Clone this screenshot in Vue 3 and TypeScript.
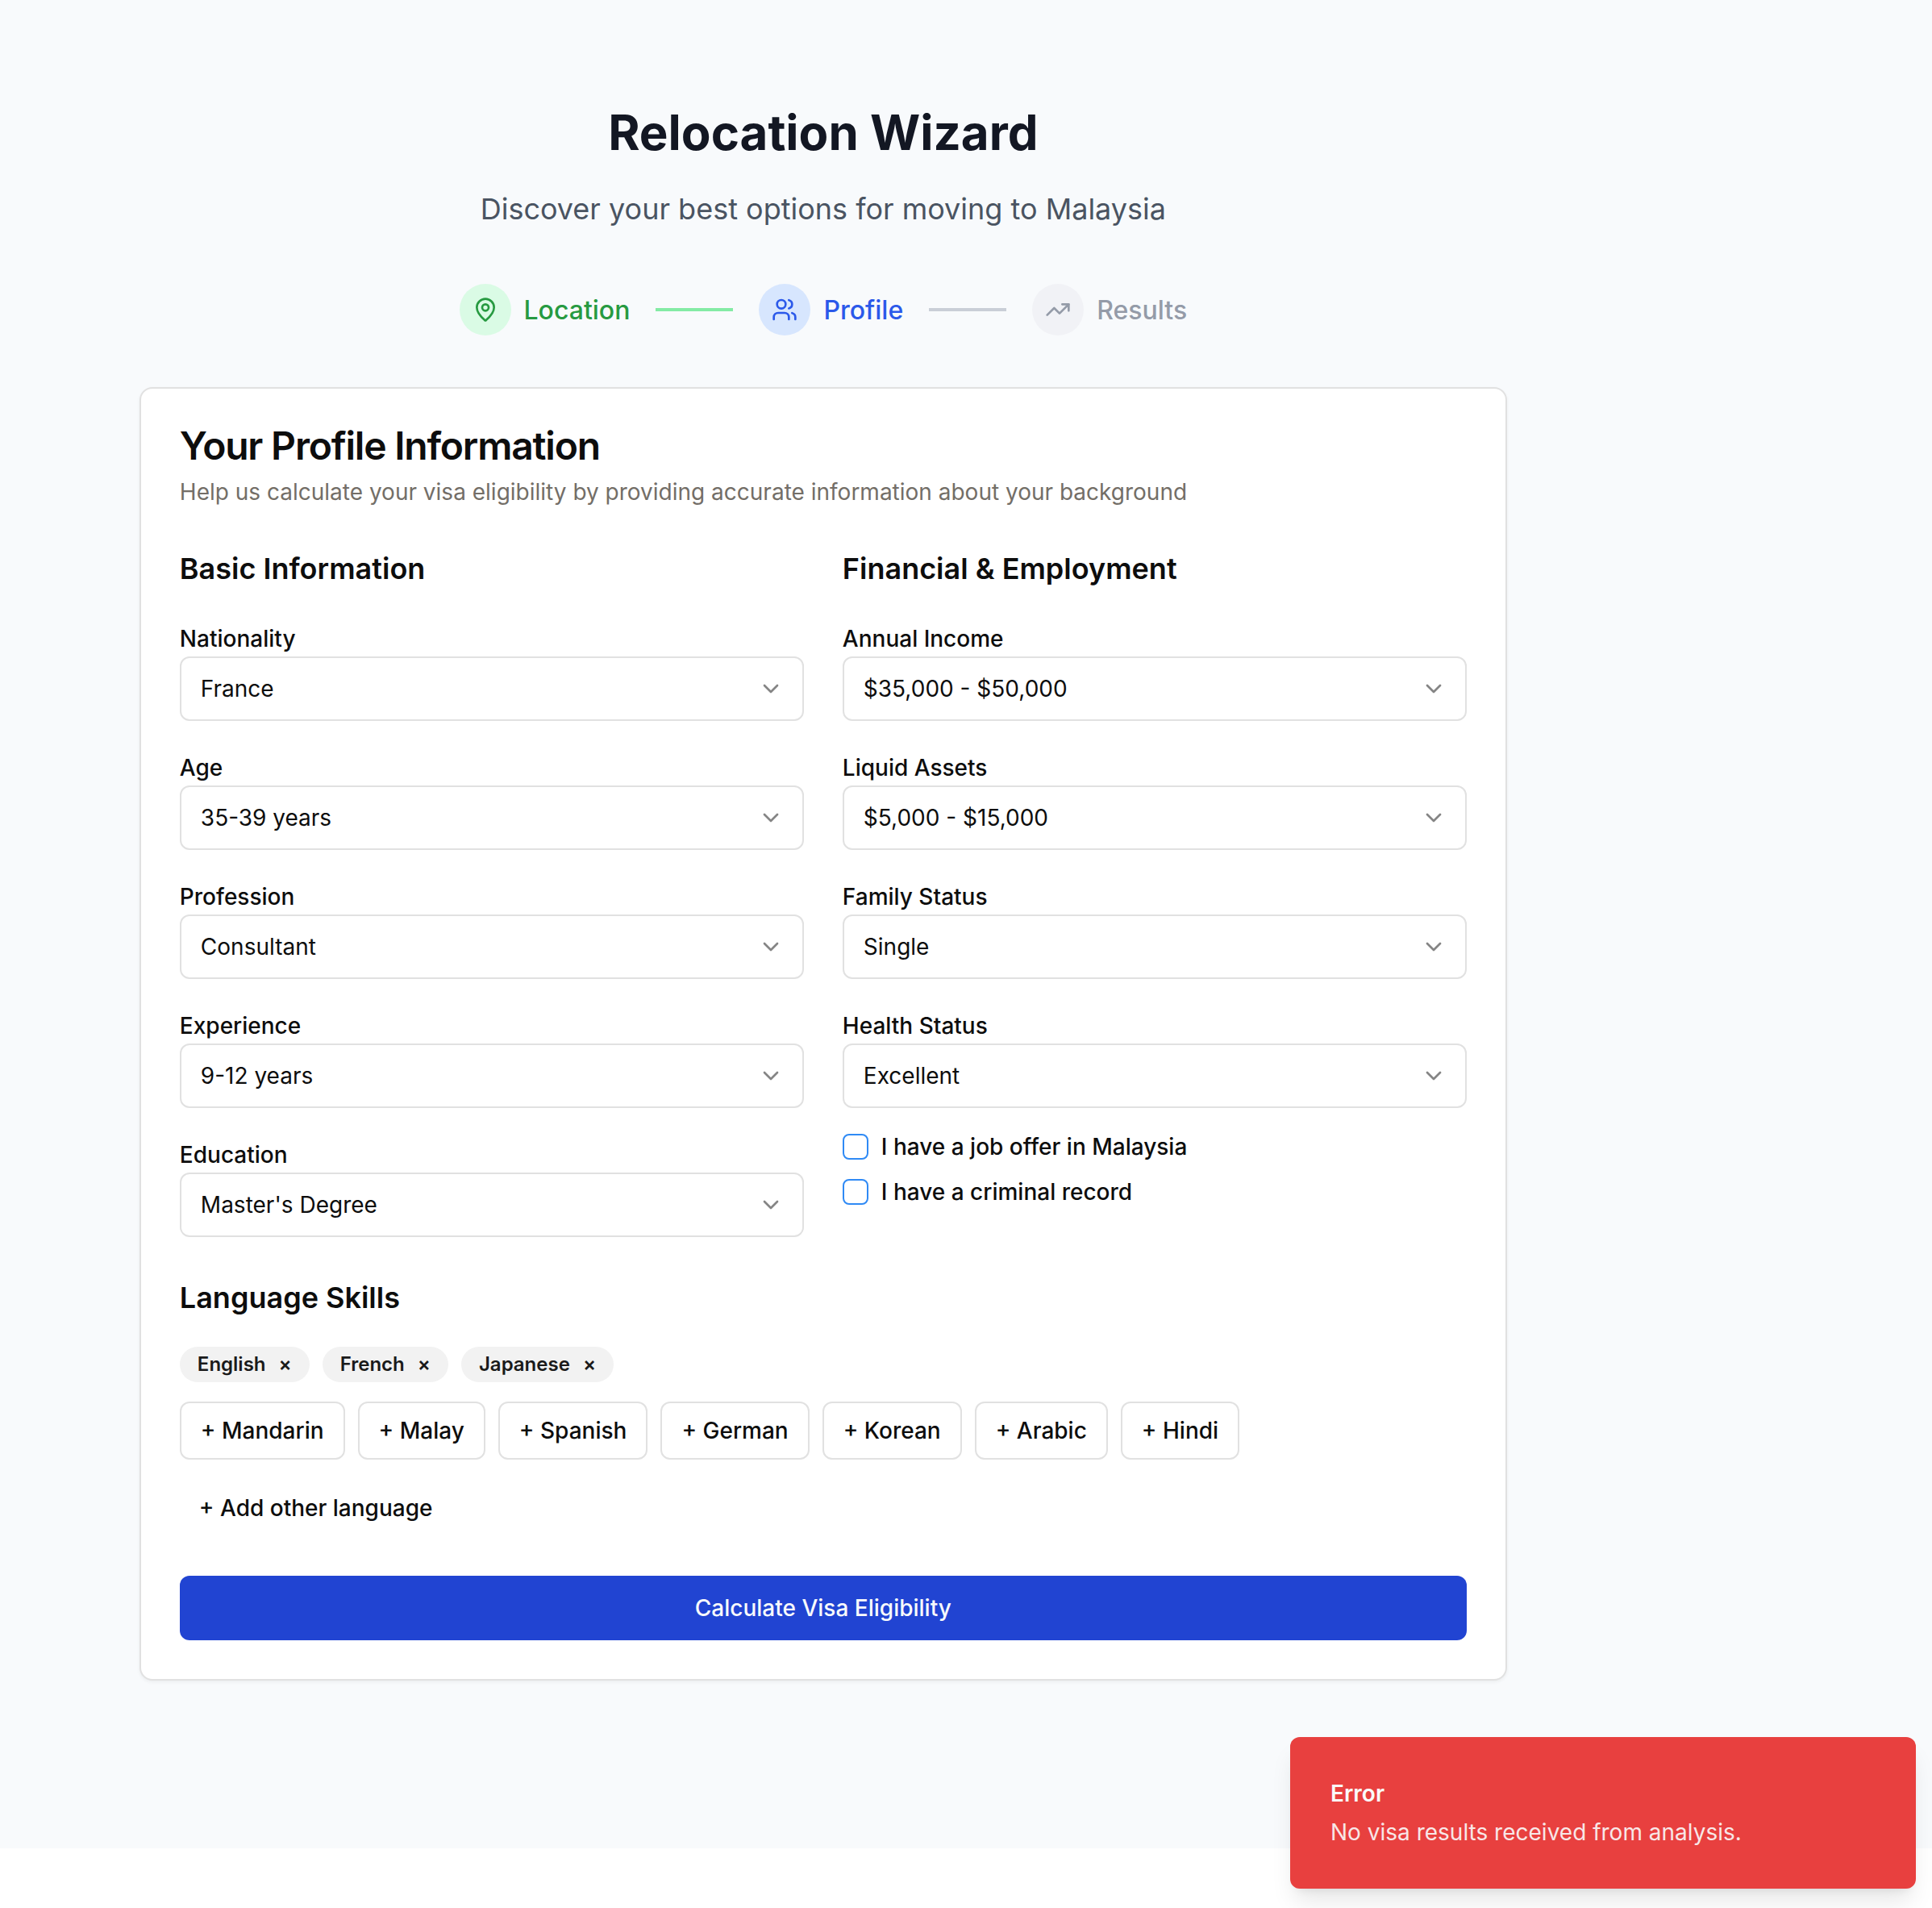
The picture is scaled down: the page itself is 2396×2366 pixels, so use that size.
<script setup lang="ts">
interface Field {
  label: string
  value: string
}

const basicFields: Field[] = [
  { label: 'Nationality', value: 'France' },
  { label: 'Age', value: '35-39 years' },
  { label: 'Profession', value: 'Consultant' },
  { label: 'Experience', value: '9-12 years' },
  { label: 'Education', value: "Master's Degree" },
]

const financialFields: Field[] = [
  { label: 'Annual Income', value: '$35,000 - $50,000' },
  { label: 'Liquid Assets', value: '$5,000 - $15,000' },
  { label: 'Family Status', value: 'Single' },
  { label: 'Health Status', value: 'Excellent' },
]

const columns = [
  { title: 'Basic Information', fields: basicFields, checks: [] as string[] },
  {
    title: 'Financial & Employment',
    fields: financialFields,
    checks: ['I have a job offer in Malaysia', 'I have a criminal record'],
  },
]

const selected: string[] = ['English', 'French', 'Japanese']
const available: string[] = ['Mandarin', 'Malay', 'Spanish', 'German', 'Korean', 'Arabic', 'Hindi']
</script>

<template>
  <div class="page">
    <main class="container">
      <header class="hero">
        <h1>Relocation Wizard</h1>
        <p>Discover your best options for moving to Malaysia</p>
      </header>

      <nav class="steps">
        <div class="step done">
          <span class="bubble">
            <svg viewBox="0 0 24 24">
              <path d="M20 10c0 4.993-5.539 10.193-7.399 11.799a1 1 0 0 1-1.202 0C9.539 20.193 4 14.993 4 10a8 8 0 0 1 16 0" />
              <circle cx="12" cy="10" r="3" />
            </svg>
          </span>
          <span class="name">Location</span>
        </div>
        <div class="line line-done"></div>
        <div class="step active">
          <span class="bubble">
            <svg viewBox="0 0 24 24">
              <path d="M16 21v-2a4 4 0 0 0-4-4H6a4 4 0 0 0-4 4v2" />
              <circle cx="9" cy="7" r="4" />
              <path d="M22 21v-2a4 4 0 0 0-3-3.87" />
              <path d="M16 3.13a4 4 0 0 1 0 7.75" />
            </svg>
          </span>
          <span class="name">Profile</span>
        </div>
        <div class="line"></div>
        <div class="step">
          <span class="bubble">
            <svg viewBox="0 0 24 24">
              <polyline points="22 7 13.5 15.5 8.5 10.5 2 17" />
              <polyline points="16 7 22 7 22 13" />
            </svg>
          </span>
          <span class="name">Results</span>
        </div>
      </nav>

      <section class="card">
        <h2>Your Profile Information</h2>
        <p class="description">
          Help us calculate your visa eligibility by providing accurate information about your background
        </p>

        <div class="columns">
          <div v-for="column in columns" :key="column.title">
            <h3>{{ column.title }}</h3>
            <div v-for="field in column.fields" :key="field.label" class="field">
              <label>{{ field.label }}</label>
              <button class="select" type="button">
                <span>{{ field.value }}</span>
                <svg viewBox="0 0 24 24"><path d="m6 9 6 6 6-6" /></svg>
              </button>
            </div>
            <div v-if="column.checks.length" class="checks">
              <div v-for="check in column.checks" :key="check" class="check">
                <span class="box"></span>
                <span>{{ check }}</span>
              </div>
            </div>
          </div>
        </div>

        <h3 class="languages-title">Language Skills</h3>
        <div class="badges">
          <span v-for="language in selected" :key="language" class="badge">
            {{ language }}<span class="remove">×</span>
          </span>
        </div>
        <div class="options">
          <button v-for="language in available" :key="language" class="option" type="button">+ {{ language }}</button>
        </div>
        <button class="add" type="button">+ Add other language</button>
        <button class="submit" type="button">Calculate Visa Eligibility</button>
      </section>
    </main>

    <aside class="toast">
      <strong>Error</strong>
      <span>No visa results received from analysis.</span>
    </aside>
  </div>
</template>

<style>
body {
  background: #fff;
}
</style>

<style scoped>
* {
  box-sizing: border-box;
}

.page {
  position: relative;
  height: 2366px;
  overflow: hidden;
  background: linear-gradient(#f8fafc 2292px, #fff 2292px);
  color: #0d0d0d;
  font-family: Inter, sans-serif;
  font-size: 28px;
  line-height: 40px;
}

h1,
h2,
h3,
p {
  margin: 0;
}

button {
  font: inherit;
  color: inherit;
  padding: 0;
  border: 0;
  background: none;
}

svg {
  display: block;
  fill: none;
  stroke: currentColor;
  stroke-width: 2;
  stroke-linecap: round;
  stroke-linejoin: round;
}

.container {
  width: 1696px;
  margin-left: 172.85px;
  padding-top: 124px;
}

.hero {
  text-align: center;
}

h1 {
  font-size: 60px;
  line-height: 80px;
  font-weight: 700;
  color: #131723;
}

.hero p {
  margin-top: 27px;
  font-size: 36px;
  line-height: 56px;
  color: #4a5462;
}

.steps {
  display: flex;
  align-items: center;
  justify-content: center;
  gap: 32px;
  margin-top: 65px;
  font-size: 32px;
  line-height: 48px;
  font-weight: 500;
}

.step {
  display: flex;
  align-items: center;
  gap: 16px;
  color: #949ba8;
}

.name {
  padding-top: 2px;
}

.bubble {
  display: flex;
  align-items: center;
  justify-content: center;
  width: 64px;
  height: 64px;
  border-radius: 50%;
  background: #f1f2f6;
}

.bubble svg {
  width: 32px;
  height: 32px;
}

.done {
  color: #279a41;
}

.done .bubble {
  background: #dafbe5;
}

.active {
  color: #2b59ea;
}

.active .bubble {
  background: #d7e6fe;
}

.line {
  width: 96px;
  height: 4px;
  background: #c9ced7;
}

.line-done {
  background: #84eba5;
}

.card {
  height: 1604px;
  margin-top: 64px;
  padding: 47px 48px 48px;
  border: 2px solid #e1e1e1;
  border-radius: 16px;
  background: #fff;
  box-shadow: 0 2px 4px rgba(0, 0, 0, 0.05);
}

h2 {
  font-size: 48px;
  line-height: 48px;
  font-weight: 600;
  letter-spacing: -1.2px;
}

.description {
  margin-top: 13px;
  color: #736e67;
}

.columns {
  display: grid;
  grid-template-columns: 1fr 1fr;
  gap: 48px;
  margin-top: 47px;
}

h3 {
  font-size: 36px;
  line-height: 56px;
  font-weight: 600;
}

.field {
  height: 128px;
  margin-top: 32px;
}

h3 + .field {
  margin-top: 33px;
}

label {
  display: block;
  height: 48px;
  padding-top: 2px;
  line-height: 48px;
  font-weight: 500;
}

.select {
  display: flex;
  align-items: center;
  justify-content: space-between;
  width: 100%;
  height: 80px;
  padding: 0 23px 0 24px;
  border: 2px solid #e1e1e1;
  border-radius: 12px;
}

.select svg {
  width: 32px;
  height: 32px;
  opacity: 0.5;
}

.checks {
  display: grid;
  gap: 16px;
  margin-top: 28px;
}

.check {
  display: flex;
  align-items: center;
  gap: 16px;
  font-weight: 500;
}

.box {
  width: 32px;
  height: 32px;
  border: 2px solid #2f8af5;
  border-radius: 8px;
}

.languages-title {
  margin-top: 47px;
}

.badges,
.options {
  display: flex;
  gap: 16px;
}

.badges {
  margin-top: 33px;
}

.badge {
  height: 44px;
  padding: 0 22px;
  border-radius: 22px;
  background: #f2f2f2;
  color: #1a1a1a;
  font-size: 24px;
  line-height: 44px;
  font-weight: 600;
}

.remove {
  margin-left: 16px;
}

.options {
  margin-top: 24px;
}

.option {
  height: 72px;
  padding: 0 24px;
  border: 2px solid #e1e1e1;
  border-radius: 12px;
  font-weight: 500;
}

.add {
  display: block;
  height: 72px;
  margin-top: 24px;
  padding: 0 24px;
  font-weight: 500;
}

.submit {
  width: 100%;
  height: 80px;
  margin-top: 48px;
  border-radius: 12px;
  background: #2144d2;
  color: #f8fafc;
  font-weight: 500;
}

.toast {
  position: absolute;
  left: 1600px;
  top: 2154px;
  display: flex;
  flex-direction: column;
  gap: 8px;
  width: 776px;
  height: 188px;
  padding: 50px;
  border-radius: 12px;
  background: #e8403f;
  color: #fafafa;
  box-shadow: 0 20px 30px -6px rgba(0, 0, 0, 0.1), 0 8px 12px -8px rgba(0, 0, 0, 0.1);
}

.toast strong {
  font-weight: 600;
}

.toast span {
  opacity: 0.9;
}
</style>
